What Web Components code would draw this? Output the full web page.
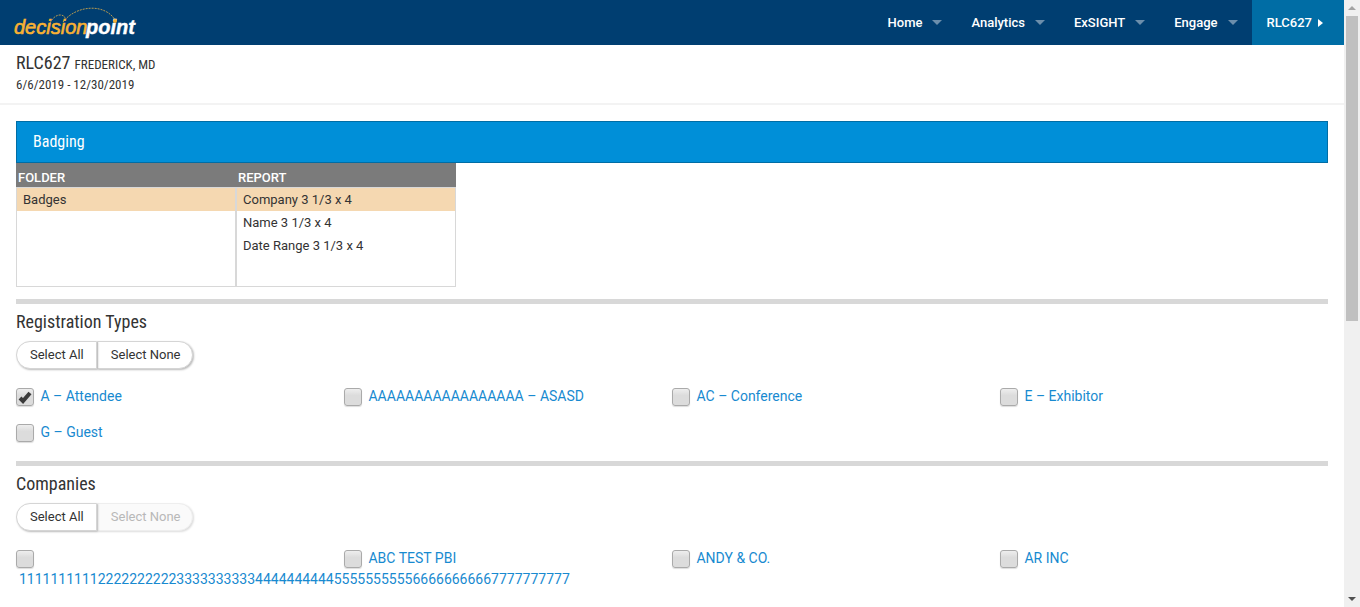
<!DOCTYPE html>
<html lang="en">
<head>
<meta charset="utf-8">
<meta name="viewport" content="width=device-width, initial-scale=1">
<title>Badging - decisionpoint</title>
<style>
  html, body { margin: 0; height: 100%; }
  body {
    overflow: hidden;
    background: #fff;
    color: #333;
    font: 13px/20px Roboto, "Liberation Sans", sans-serif;
    --condensed: "Roboto Condensed", "Liberation Sans Narrow", Roboto, sans-serif;
    --navy: #003e71;
    --teal: #006da5;
    --blue: #008fd8;
    --link: #188ad0;
    --rule: #d8d8d8;
  }
</style>
</head>
<body>
<dp-app>
  <dp-header slot="header">
    <dp-nav-item>Home</dp-nav-item>
    <dp-nav-item>Analytics</dp-nav-item>
    <dp-nav-item>ExSIGHT</dp-nav-item>
    <dp-nav-item>Engage</dp-nav-item>
    <dp-nav-item current>RLC627</dp-nav-item>
  </dp-header>
  <dp-event-bar>
    RLC627
    <span slot="place">FREDERICK, MD</span>
    <span slot="dates">6/6/2019 - 12/30/2019</span>
  </dp-event-bar>
  <dp-content>
    <dp-panel-title>Badging</dp-panel-title>
    <dp-report-picker></dp-report-picker>
    <dp-filter heading="Registration Types">
      <dp-check checked>A – Attendee</dp-check>
      <dp-check>AAAAAAAAAAAAAAAAA – ASASD</dp-check>
      <dp-check>AC – Conference</dp-check>
      <dp-check>E – Exhibitor</dp-check>
      <dp-check>G – Guest</dp-check>
    </dp-filter>
    <dp-filter heading="Companies" none-selected>
      <dp-check>1111111111222222222233333333334444444444555555555566666666667777777777</dp-check>
      <dp-check>ABC TEST PBI</dp-check>
      <dp-check>ANDY &amp; CO.</dp-check>
      <dp-check>AR INC</dp-check>
    </dp-filter>
  </dp-content>
  <dp-scrollbar slot="scrollbar"></dp-scrollbar>
</dp-app>

<script>
function define(name, html, setup) {
  const template = document.createElement('template');
  template.innerHTML = html;
  customElements.define(name, class extends HTMLElement {
    constructor() {
      super();
      this.attachShadow({ mode: 'open' }).append(template.content.cloneNode(true));
    }
    connectedCallback() {
      if (setup) setup(this, this.shadowRoot);
    }
  });
}

define('dp-app', `
  <style>
    :host { display: grid; grid-template-columns: minmax(0, 1fr) 16px; height: 100vh; }
    .page { overflow: hidden; }
  </style>
  <div class="page"><slot name="header"></slot><main><slot></slot></main></div>
  <slot name="scrollbar"></slot>`);

define('dp-header', `
  <style>
    :host { display: block; background: var(--navy); }
    header { display: flex; justify-content: space-between; min-height: 45px; }
    nav { display: flex; }
    .brand { display: flex; align-items: center; padding-left: 14px; }
    svg { display: block; }
    text { font: italic 20px "Liberation Sans", Arial, sans-serif; }
    .a { fill: #f9b233; stroke: #f9b233; stroke-width: .6; }
    .b { font-weight: 700; fill: #fff; stroke: #fff; stroke-width: .4; }
  </style>
  <header>
    <a class="brand" href="#" aria-label="decisionpoint home">
      <svg width="126" height="33" viewBox="0 0 126 33">
        <path d="M36 17C39 11 43 9 46 9C52 9 52 14 49 16C62 -1 91 -3 101 14" fill="none" stroke="#b79a50" stroke-dasharray="2 1"/>
        <text class="a" x="0" y="28">decision</text>
        <text class="b" x="72" y="28">point</text>
        <circle cx="101" cy="15" r="2" fill="#f9b233"/>
      </svg>
    </a>
    <nav><slot></slot></nav>
  </header>`);

define('dp-nav-item', `
  <style>
    :host { display: flex; }
    a { display: flex; align-items: center; gap: 10px; padding: 0 14px 0 15px; color: #fff; font-weight: 500; text-decoration: none; }
    a::after { content: ""; border: 5px solid transparent; border-top-color: #6c8eac; border-bottom: 0; }
    :host([current]) a { gap: 6px; padding-right: 21px; background: var(--teal); }
    :host([current]) a::after { border: 4px solid transparent; border-left: 5px solid #fff; border-right: 0; }
  </style>
  <a href="#"><slot></slot></a>`);

define('dp-event-bar', `
  <style>
    :host { display: block; padding: 7px 16px 8px; border-bottom: 2px solid #f3f3f3; font-family: var(--condensed); }
    h1 { margin: 0; font-size: 18px; line-height: 21px; font-weight: 400; }
    slot[name=place]::slotted(*) { font-size: 13px; line-height: 13px; }
    p { margin: 2px 0 0; font-size: 13px; line-height: 20px; }
  </style>
  <h1><slot></slot> <slot name="place"></slot></h1>
  <p><slot name="dates"></slot></p>`);

define('dp-content', `
  <style>:host { display: block; padding: 16px; }</style>
  <slot></slot>`);

define('dp-panel-title', `
  <style>
    :host { display: block; }
    h2 { margin: 0; padding: 10px 16px; border: 1px solid var(--teal); background: var(--blue); color: #fff; font: 400 16px/20px var(--condensed); }
  </style>
  <h2><slot></slot></h2>`);

define('dp-report-picker', `
  <style>
    :host { display: block; }
    table { width: 440px; max-width: 100%; table-layout: fixed; border-collapse: separate; border-spacing: 0; }
    th { padding: 6px 2px 0; background: #7b7b7b; color: #fff; font-weight: 500; line-height: 18px; text-align: left; }
    td { height: 98px; padding: 0; border: 1px solid var(--rule); vertical-align: top; }
    ul { margin: 0; padding: 0; list-style: none; }
    a { display: block; padding: 0 6px; line-height: 23px; color: #333; text-decoration: none; }
    a[aria-current] { background: #f5d8b1; }
  </style>
  <table>
    <thead><tr><th scope="col">FOLDER</th><th scope="col">REPORT</th></tr></thead>
    <tbody><tr>
      <td><ul><li><a href="#" aria-current="true">Badges</a></li></ul></td>
      <td><ul>
        <li><a href="#" aria-current="true">Company 3 1/3 x 4</a></li>
        <li><a href="#">Name 3 1/3 x 4</a></li>
        <li><a href="#">Date Range 3 1/3 x 4</a></li>
      </ul></td>
    </tr></tbody>
  </table>`);

define('dp-filter', `
  <style>
    :host { display: block; margin-top: 12px; border-top: 5px solid var(--rule); padding-top: 5px; }
    h2 { margin: 0; font: 400 18px/26px var(--condensed); }
    .buttons { display: flex; margin: 6px 0 17px; }
    button {
      padding: 0 12px 0 13px; border: 1px solid #d5d5d5; background: #fff; color: #333;
      font: 13px/26px Roboto, "Liberation Sans", sans-serif; box-shadow: 1px 1px 2px #bbb;
    }
    button:first-child { border-radius: 14px 0 0 14px; position: relative; }
    button:last-child { border-radius: 0 14px 14px 0; }
    button:disabled { border-color: #eee; background: #fafafa; color: #b8b8b8; box-shadow: 1px 1px 2px #ddd; }
    .options { display: grid; grid-template-columns: repeat(4, minmax(0, 1fr)); row-gap: 15px; padding-bottom: 6px; }
  </style>
  <section>
    <h2></h2>
    <div class="buttons">
      <button type="button">Select All</button><button type="button">Select None</button>
    </div>
    <div class="options"><slot></slot></div>
  </section>`, (host, root) => {
    root.querySelector('h2').textContent = host.getAttribute('heading');
    root.querySelector('button:last-child').disabled = host.hasAttribute('none-selected');
  });

define('dp-check', `
  <style>
    :host { display: block; }
    label { display: block; color: var(--link); font-size: 14px; line-height: 21px; }
    input {
      appearance: none; box-sizing: border-box; width: 18px; height: 18px; margin: 0; vertical-align: middle;
      border: 1px solid #aaa; border-radius: 3px; background: linear-gradient(#eee, #dcdcdc 40%);
      box-shadow: 0 1px 1px #ddd;
    }
    .box { display: inline-grid; vertical-align: middle; }
    .box > * { grid-area: 1 / 1; }
    svg { display: none; pointer-events: none; }
    input:checked + svg { display: block; }
    .text { margin-left: 3px; }
  </style>
  <label><span class="box"><input type="checkbox"><svg width="18" height="18" viewBox="0 0 18 18" aria-hidden="true"><path d="M4 10L7 13L14 5" fill="none" stroke="#3b3b3b" stroke-width="4"/></svg></span>
    <span class="text"><slot></slot></span></label>`, (host, root) => {
    root.querySelector('input').checked = host.hasAttribute('checked');
  });

define('dp-scrollbar', `
  <style>
    :host { display: grid; grid-template-rows: 16px 1fr 16px; justify-items: center; align-items: center; background: #f0f0f0; }
    .thumb { align-self: start; width: 12px; height: 53%; background: #c0c0c0; }
    .up, .down { border: 4px solid transparent; }
    .up { border-top: 0; border-bottom-color: #a3a3a3; }
    .down { border-bottom: 0; border-top-color: #505050; }
  </style>
  <div class="up"></div><div class="thumb"></div><div class="down"></div>`);
</script>
</body>
</html>
